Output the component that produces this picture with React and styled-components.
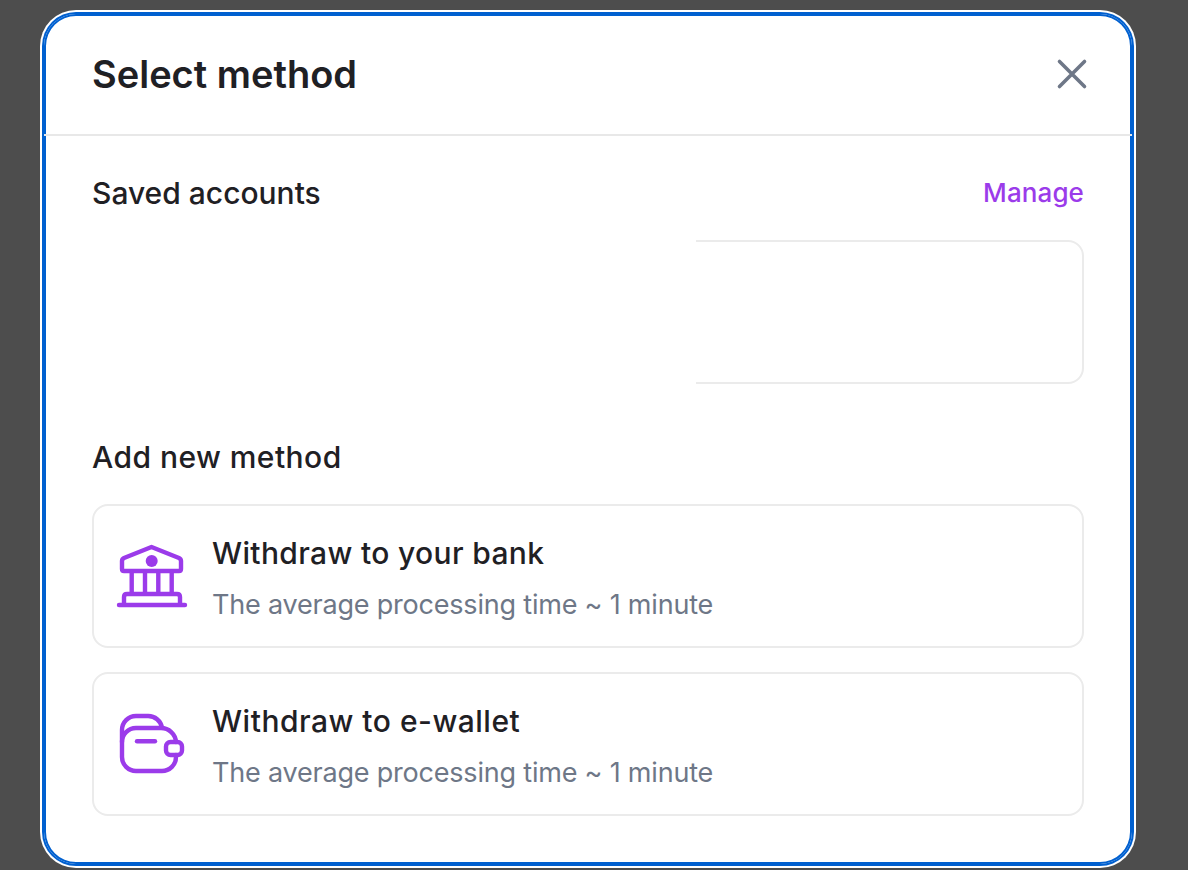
import React from 'react';
import styled, { createGlobalStyle } from 'styled-components';

const GlobalStyle = createGlobalStyle`
  html, body {
    margin: 0;
    padding: 0;
    height: 100%;
    background: #4d4d4d;
  }
  body {
    font-family: "Inter", "Noto Sans", sans-serif;
    overflow: hidden;
  }
`;

const Page = styled.div`
  box-sizing: border-box;
  height: 870px;
  padding: 14px 56px 6px 44px;
`;

const Modal = styled.div`
  box-sizing: border-box;
  height: 850px;
  background: #fff;
  border-radius: 32px;
  box-shadow: inset 0 0 0 2px #0060d0, 0 0 0 2px #0060d0, 0 0 0 4px #fff;
`;

const Header = styled.header`
  box-sizing: border-box;
  height: 122px;
  display: flex;
  align-items: center;
  justify-content: space-between;
  padding: 0 40px 0 48px;
  border-bottom: 2px solid #e8e8e8;
`;

const Title = styled.h1`
  margin: 0;
  font-size: 38px;
  line-height: 44px;
  font-weight: 600;
  color: #1f2024;
`;

const CloseButton = styled.button`
  width: 40px;
  height: 40px;
  padding: 0;
  border: 0;
  background: none;
  display: flex;
  align-items: center;
  justify-content: center;
`;

const Body = styled.div`
  padding: 35px 48px 0;
`;

const SectionHead = styled.div`
  display: flex;
  align-items: center;
  justify-content: space-between;
  height: 44px;
`;

const SectionTitle = styled.h2`
  margin: 0;
  font-size: 30px;
  line-height: 44px;
  font-weight: 500;
  letter-spacing: ${p => p.$spacing || 0}px;
  color: #1f2024;
`;

const ManageLink = styled.a`
  margin-top: -2px;
  font-size: 26px;
  font-weight: 500;
  letter-spacing: 0.1px;
  color: #9b3bea;
`;

const Card = styled.div`
  box-sizing: border-box;
  position: relative;
  height: 144px;
  margin-top: ${p => p.$top}px;
  border: 2px solid #ebebeb;
  border-radius: 16px;
  display: flex;
  align-items: center;
  gap: 24px;
  padding-left: 22px;
`;

const Redaction = styled.div`
  position: absolute;
  left: -2px;
  top: -2px;
  bottom: -2px;
  width: 604px;
  background: #fff;
`;

const AddTitle = styled(SectionHead)`
  margin-top: 51px;
`;

const Info = styled.div`
  display: flex;
  flex-direction: column;
  gap: 14px;
  padding-top: 4px;
`;

const RowTitle = styled.div`
  font-size: 30px;
  line-height: 40px;
  font-weight: 500;
  letter-spacing: ${p => p.$spacing}px;
  color: #1f2024;
`;

const RowText = styled.div`
  font-size: 27px;
  line-height: 36px;
  font-weight: 400;
  letter-spacing: -0.2px;
  color: #6e7787;
`;

const Icon = styled.svg`
  width: 72px;
  height: 72px;
  flex: none;
  fill: none;
  stroke: #9b3bea;
  stroke-width: 4.4;
  stroke-linecap: round;
  stroke-linejoin: round;
`;

const BankIcon = () => (
  <Icon viewBox="0 0 72 72">
    <path d="M35.5 7 8 18q-2 1-2 3v8q0 2 2 2h55q2 0 2-2v-8q0-2-2-3Z" />
    <circle cx="35.7" cy="21" r="6" fill="#9b3bea" stroke="none" />
    <path d="M15.7 32v21M29 32v21M42.3 32v21M55.7 32v21" />
    <path d="M8 65v-8q0-3 3-3h50q3 0 3 3v8M3 65h66" />
  </Icon>
);

const WalletIcon = () => (
  <Icon viewBox="0 0 72 72">
    <path d="M6 34V22A14 14 0 0 1 20 8h12a14 14 0 0 1 14 11.5" />
    <path d="M6 34a14 14 0 0 1 14-14h25a15 15 0 0 1 15 14M60 47v2a14 14 0 0 1-14 14H20A14 14 0 0 1 6 49V34" />
    <rect x="50" y="34" width="16" height="13" rx="4.5" />
    <path d="M21 33.3h18" />
  </Icon>
);

const methods = [
  { title: 'Withdraw to your bank', icon: <BankIcon />, top: 25, spacing: 0.35 },
  { title: 'Withdraw to e-wallet', icon: <WalletIcon />, top: 24, spacing: 0.5 },
];

export default function App() {
  return (
    <>
      <GlobalStyle />
      <Page>
        <Modal>
          <Header>
            <Title>Select method</Title>
            <CloseButton aria-label="Close">
              <svg width="32" height="32" viewBox="0 0 32 32" fill="none" stroke="#6e7787" strokeWidth="3.6" strokeLinecap="round">
                <path d="M3.5 3.5l25 25M28.5 3.5l-25 25" />
              </svg>
            </CloseButton>
          </Header>
          <Body>
            <SectionHead>
              <SectionTitle>Saved accounts</SectionTitle>
              <ManageLink>Manage</ManageLink>
            </SectionHead>
            <Card $top={25}>
              <Redaction />
            </Card>
            <AddTitle>
              <SectionTitle $spacing={0.45}>Add new method</SectionTitle>
            </AddTitle>
            {methods.map(m => (
              <Card key={m.title} $top={m.top}>
                {m.icon}
                <Info>
                  <RowTitle $spacing={m.spacing}>{m.title}</RowTitle>
                  <RowText>The average processing time ~ 1 minute</RowText>
                </Info>
              </Card>
            ))}
          </Body>
        </Modal>
      </Page>
    </>
  );
}
